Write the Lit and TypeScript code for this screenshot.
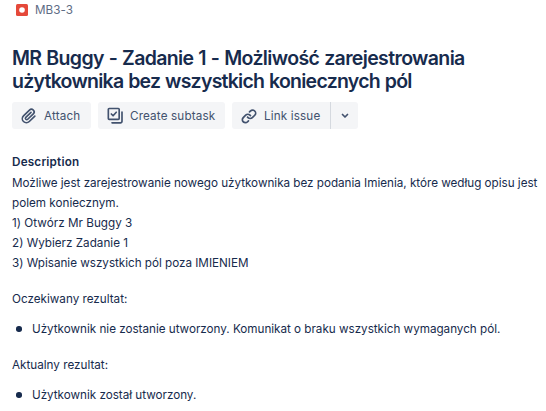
import { LitElement, html, css, svg } from "lit";
import { customElement } from "lit/decorators.js";

const attachIcon = svg`<path d="M11.643 17.965c-1.53 1.495-4.016 1.496-5.542.004a3.773 3.773 0 0 1 .002-5.412l7.147-6.985a2.316 2.316 0 0 1 3.233-.003c.893.873.895 2.282.004 3.153l-6.703 6.55a.653.653 0 0 1-.914-.008.62.62 0 0 1 0-.902l6.229-6.087a.941.941 0 0 0 0-1.353.995.995 0 0 0-1.384 0l-6.23 6.087a2.502 2.502 0 0 0 0 3.607 2.643 2.643 0 0 0 3.683.009l6.703-6.55a4.074 4.074 0 0 0-.003-5.859 4.306 4.306 0 0 0-6.002.003l-7.148 6.985a5.655 5.655 0 0 0-.001 8.118c2.29 2.239 6.015 2.238 8.31-.005l6.686-6.533a.941.941 0 0 0 0-1.353.995.995 0 0 0-1.384 0l-6.686 6.534z"/>`;
const subtaskIcon = svg`<g fill="none" stroke="currentColor" stroke-width="2" stroke-linejoin="round" stroke-linecap="round"><rect x="4" y="3" width="13" height="13" rx="1"/><path d="M7.6 9.6l2.1 2.1 3.8-4.2M20.4 7.2v11.2a1.8 1.8 0 0 1-1.8 1.8H8.4"/></g>`;
const linkIcon = svg`<path d="M12.856 5.457l-.937.92a1.002 1.002 0 0 0 0 1.437 1.047 1.047 0 0 0 1.463 0l.984-.966c.967-.95 2.542-1.135 3.602-.288a2.54 2.54 0 0 1 .203 3.81l-2.903 2.852a2.646 2.646 0 0 1-3.696 0l-1.11-1.09L9 13.57l1.108 1.089c1.822 1.788 4.802 1.788 6.622 0l2.905-2.852a4.558 4.558 0 0 0-.357-6.82c-1.893-1.517-4.695-1.226-6.422.47"/><path d="M11.144 19.543l.937-.92a1.002 1.002 0 0 0 0-1.437 1.047 1.047 0 0 0-1.462 0l-.985.966c-.967.95-2.542 1.135-3.602.288a2.54 2.54 0 0 1-.203-3.81l2.903-2.852a2.646 2.646 0 0 1 3.696 0l1.11 1.09L15 11.43l-1.108-1.089c-1.822-1.788-4.802-1.788-6.622 0l-2.905 2.852a4.558 4.558 0 0 0 .357 6.82c1.893 1.517 4.695 1.226 6.422-.47"/>`;

@customElement("app-root")
export class AppRoot extends LitElement {
  static styles = css`
    :host { display: block; height: 411px; overflow: hidden; background: #fff; color: #172b4d; font: 400 11.7px/20px Inter, sans-serif; }
    * { box-sizing: border-box; }
    .page { padding: 0 0 0 12px; white-space: nowrap; }
    .crumb { display: flex; align-items: center; gap: 7px; height: 20px; padding-left: 4px; color: #5e6c84; }
    .bug { width: 12px; height: 12px; display: block; }
    .key { letter-spacing: 0.05px; }
    h1 { margin: 27px 0 0; font-size: 19.5px; line-height: 23px; font-weight: 600; word-spacing: 0.6px; }
    h1 span, p span { display: block; }
    .t1 { letter-spacing: -0.63px; }
    .t2 { letter-spacing: -0.75px; }
    .actions { display: flex; gap: 7px; margin-top: 9px; color: #42526e; }
    .btn { display: flex; align-items: center; height: 27px; background: #f4f5f7; border-radius: 3px; padding-left: 7px; gap: 5px; letter-spacing: 0.14px; }
    .icon { width: 20px; height: 20px; fill: currentColor; display: block; flex: none; }
    .attach { width: 79px; }
    .subtask { width: 127px; }
    .split { display: flex; }
    .link { width: 98px; border-radius: 3px 0 0 3px; }
    .more { width: 28px; height: 27px; background: #f4f5f7; border-left: 1px solid #d5d9df; border-radius: 0 3px 3px 0; display: flex; align-items: center; justify-content: center; }
    .chev { width: 8px; height: 6px; display: block; }
    h2 { margin: 23px 0 0; font-size: 11.7px; line-height: 20px; font-weight: 600; letter-spacing: 0.2px; }
    p { margin: 1px 0 0; }
    p.label { margin-top: 16px; }
    .b1, .l1, .l2 { letter-spacing: -0.02px; }
    .b3 { letter-spacing: 0.02px; }
    .b5 { letter-spacing: -0.02px; }
    ul { list-style: none; margin: 10px 0 0; padding: 0; }
    li { display: flex; align-items: center; gap: 10.2px; padding-left: 4.3px; }
    .dot { width: 5.5px; height: 5.5px; border-radius: 50%; background: #172b4d; }
  `;

  private icon(body: unknown) {
    return html`<svg class="icon" viewBox="0 0 24 24">${body}</svg>`;
  }

  render() {
    return html`<div class="page">
      <div class="crumb">
        <svg class="bug" viewBox="0 0 12 12"><rect width="12" height="12" rx="1.5" fill="#e5493a"/><circle cx="6" cy="6" r="2.8" fill="#fff"/></svg>
        <span class="key">MB3-3</span>
      </div>
      <h1><span class="t1">MR Buggy - Zadanie 1 - Możliwość zarejestrowania</span><span class="t2">użytkownika bez wszystkich koniecznych pól</span></h1>
      <div class="actions">
        <div class="btn attach">${this.icon(attachIcon)}<span>Attach</span></div>
        <div class="btn subtask">${this.icon(subtaskIcon)}<span>Create subtask</span></div>
        <div class="split">
          <div class="btn link">${this.icon(linkIcon)}<span>Link issue</span></div>
          <div class="more"><svg class="chev" viewBox="0 0 8 6"><path d="M1.5 1.5L4 4l2.5-2.5" fill="none" stroke="#42526e" stroke-width="1.7" stroke-linecap="round" stroke-linejoin="round"/></svg></div>
        </div>
      </div>
      <h2>Description</h2>
      <p>
        <span class="b1">Możliwe jest zarejestrowanie nowego użytkownika bez podania Imienia, które według opisu jest</span>
        <span class="b2">polem koniecznym.</span>
        <span class="b3">1) Otwórz Mr Buggy 3</span>
        <span class="b4">2) Wybierz Zadanie 1</span>
        <span class="b5">3) Wpisanie wszystkich pól poza IMIENIEM</span>
      </p>
      <p class="label">Oczekiwany rezultat:</p>
      <ul><li><i class="dot"></i><span class="l1">Użytkownik nie zostanie utworzony. Komunikat o braku wszystkich wymaganych pól.</span></li></ul>
      <p class="label">Aktualny rezultat:</p>
      <ul><li><i class="dot"></i><span class="l2">Użytkownik został utworzony.</span></li></ul>
    </div>`;
  }
}
